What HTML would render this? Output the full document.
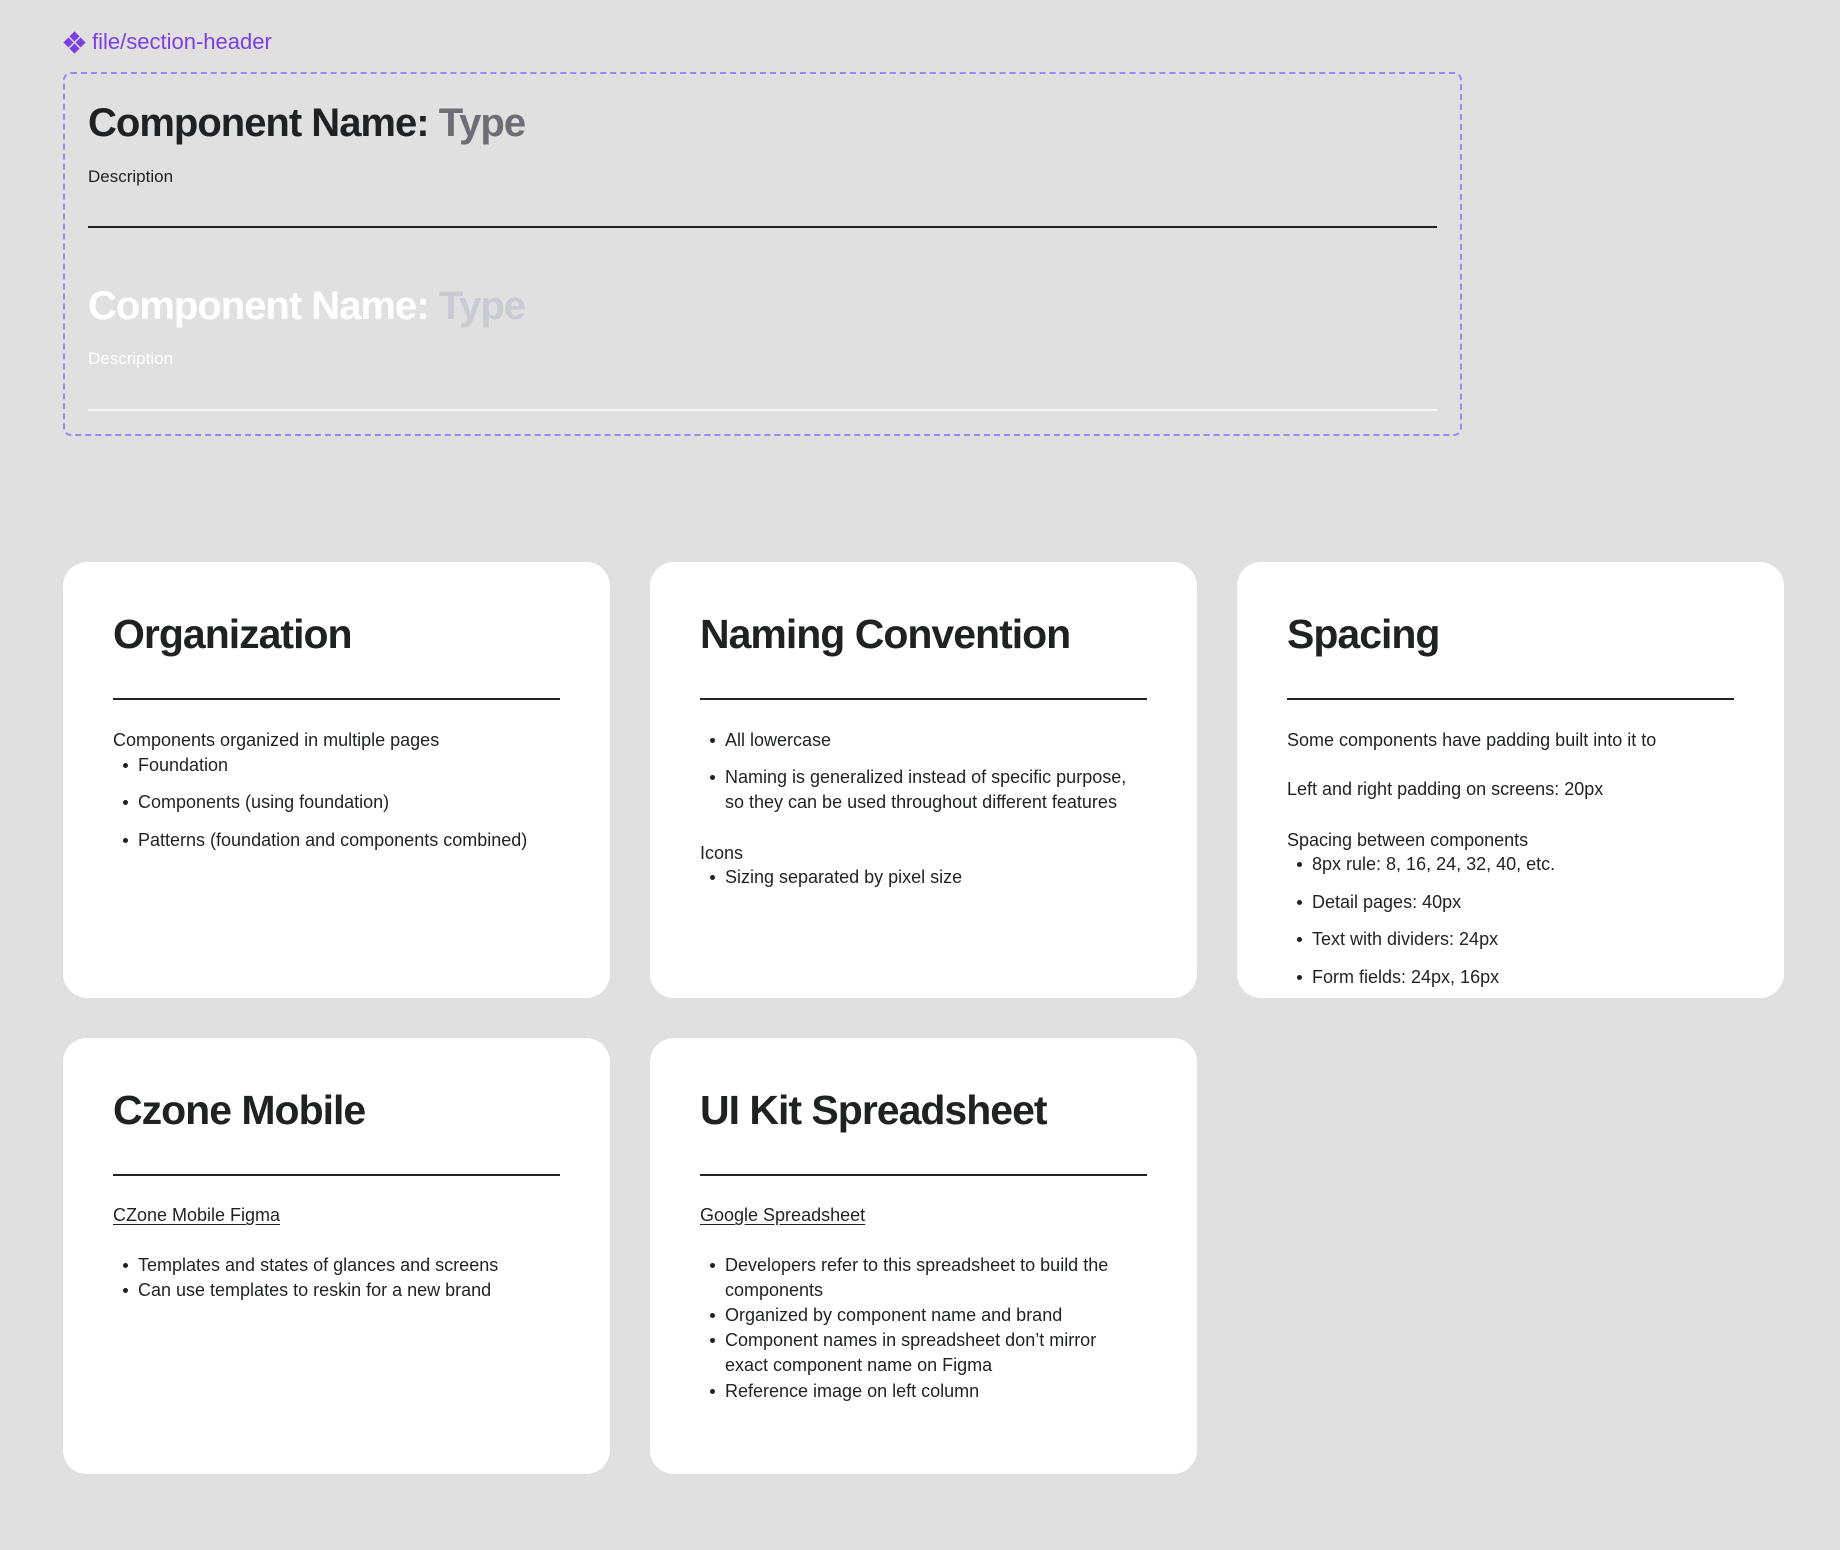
<!DOCTYPE html>
<html><head><meta charset="utf-8">
<style>
*{margin:0;padding:0;box-sizing:border-box}
html,body{width:1840px;height:1550px;background:#e0e0e0;overflow:hidden}
body{position:relative;font-family:"Liberation Sans",sans-serif;color:#1f2123}
.abs{position:absolute;white-space:nowrap}
.lbl{left:92px;top:28px;font-size:22px;color:#7b3fe4;line-height:28px}
.box{position:absolute;left:63px;top:72px;width:1399px;height:364px;border:2px dashed #9b87f5;border-radius:8px}
.ht{font-size:40px;font-weight:bold;letter-spacing:-1px;line-height:50px}
.hd{font-size:17px;line-height:22px}
.card{position:absolute;width:547px;height:436px;background:#fff;border-radius:24px;overflow:hidden}
.ct{position:absolute;left:50px;top:47px;font-size:41px;font-weight:bold;letter-spacing:-1px;line-height:50px;white-space:nowrap}
.cl{position:absolute;left:50px;top:136px;width:447px;height:1.5px;background:#222}
.t{position:absolute;left:50px;font-size:18px;line-height:25px;white-space:nowrap}
.b{position:absolute;left:75px;font-size:18px;line-height:25px;white-space:nowrap}
.b::before{content:"";position:absolute;left:-15px;top:10px;width:5px;height:5px;border-radius:50%;background:#1f2123}
.b.nb::before{display:none}
u{text-decoration:underline;text-underline-offset:3px}
</style></head><body>
<svg class="abs" style="left:63px;top:31px" width="23" height="23" viewBox="0 0 20 20"><g fill="#7b3fe4"><path d="M10 0.3l4.4 4.4-4.4 4.4-4.4-4.4z"/><path d="M10 10.9l4.4 4.4-4.4 4.4-4.4-4.4z"/><path d="M4.7 5.6l4.4 4.4-4.4 4.4-4.4-4.4z"/><path d="M15.3 5.6l4.4 4.4-4.4 4.4-4.4-4.4z"/></g></svg>
<div class="abs lbl">file/section-header</div>
<div class="box"></div>
<div class="abs ht" style="left:88px;top:98px">Component Name: <span style="color:#6e6d75">Type</span></div>
<div class="abs hd" style="left:88px;top:166px">Description</div>
<div class="abs" style="left:88px;top:226px;width:1349px;height:1.5px;background:#222"></div>
<div class="abs ht" style="left:88px;top:281px;color:#fff">Component Name: <span style="color:#c9cad3">Type</span></div>
<div class="abs hd" style="left:88px;top:348px;color:#fff">Description</div>
<div class="abs" style="left:88px;top:409px;width:1349px;height:1.5px;background:#f4f4f4"></div>

<div class="card" style="left:63px;top:562px">
<div class="ct">Organization</div><div class="cl"></div>
<div class="t" style="top:166px">Components organized in multiple pages</div>
<div class="b" style="top:191px">Foundation</div>
<div class="b" style="top:228px">Components (using foundation)</div>
<div class="b" style="top:266px">Patterns (foundation and components combined)</div>
</div>

<div class="card" style="left:650px;top:562px">
<div class="ct">Naming Convention</div><div class="cl"></div>
<div class="b" style="top:166px">All lowercase</div>
<div class="b" style="top:203px">Naming is generalized instead of specific purpose,</div>
<div class="b nb" style="top:228px">so they can be used throughout different features</div>
<div class="t" style="top:279px">Icons</div>
<div class="b" style="top:303px">Sizing separated by pixel size</div>
</div>

<div class="card" style="left:1237px;top:562px">
<div class="ct">Spacing</div><div class="cl"></div>
<div class="t" style="top:166px">Some components have padding built into it to</div>
<div class="t" style="top:215px">Left and right padding on screens: 20px</div>
<div class="t" style="top:266px">Spacing between components</div>
<div class="b" style="top:290px">8px rule: 8, 16, 24, 32, 40, etc.</div>
<div class="b" style="top:328px">Detail pages: 40px</div>
<div class="b" style="top:365px">Text with dividers: 24px</div>
<div class="b" style="top:403px">Form fields: 24px, 16px</div>
</div>

<div class="card" style="left:63px;top:1038px">
<div class="ct">Czone Mobile</div><div class="cl"></div>
<div class="t" style="top:165px"><u>CZone Mobile Figma</u></div>
<div class="b" style="top:215px">Templates and states of glances and screens</div>
<div class="b" style="top:240px">Can use templates to reskin for a new brand</div>
</div>

<div class="card" style="left:650px;top:1038px">
<div class="ct">UI Kit Spreadsheet</div><div class="cl"></div>
<div class="t" style="top:165px"><u>Google Spreadsheet</u></div>
<div class="b" style="top:215px">Developers refer to this spreadsheet to build the</div>
<div class="b nb" style="top:240px">components</div>
<div class="b" style="top:265px">Organized by component name and brand</div>
<div class="b" style="top:290px">Component names in spreadsheet don’t mirror</div>
<div class="b nb" style="top:315px">exact component name on Figma</div>
<div class="b" style="top:341px">Reference image on left column</div>
</div>
</body></html>
